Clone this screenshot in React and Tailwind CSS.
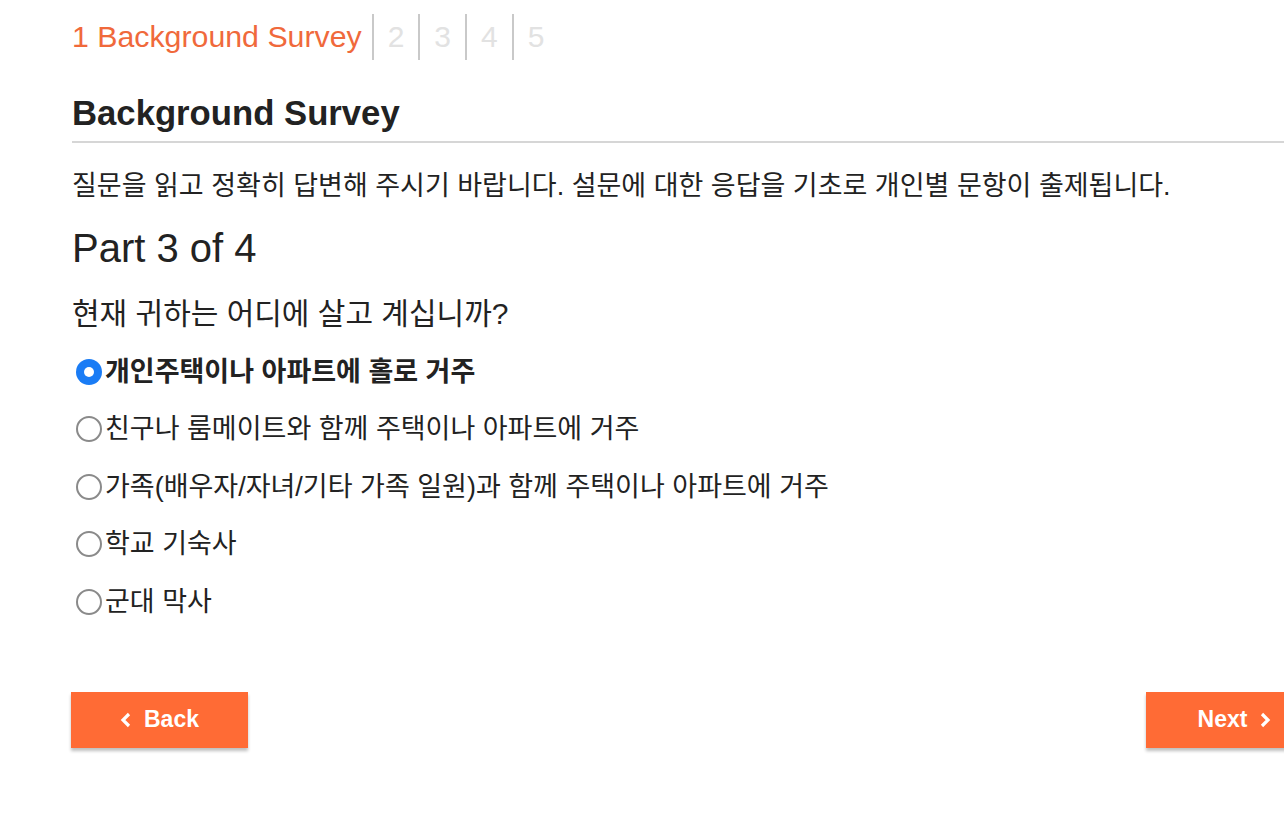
import React from "react";

const font = { fontFamily: '"Liberation Sans", Arial, "Noto Sans CJK KR", sans-serif' };

function Radio({ checked }) {
  return checked ? (
    <span className="mr-[3px] inline-flex h-[26px] w-[26px] shrink-0 items-center justify-center rounded-full bg-[#1a7cf5]">
      <span className="h-[10px] w-[10px] rounded-full bg-white" />
    </span>
  ) : (
    <span className="mr-[3px] inline-block h-[26px] w-[26px] shrink-0 rounded-full border-2 border-[#8a8a8a] bg-white" />
  );
}

export default function App() {
  const options = [
    "개인주택이나 아파트에 홀로 거주",
    "친구나 룸메이트와 함께 주택이나 아파트에 거주",
    "가족(배우자/자녀/기타 가족 일원)과 함께 주택이나 아파트에 거주",
    "학교 기숙사",
    "군대 막사",
  ];
  return (
    <div className="h-[827px] w-[1284px] overflow-hidden bg-white text-[#222]" style={font}>
      <div className="ml-[71px] w-[1252px]">
        <div className="flex h-[74px] items-start pt-[14px]">
          <span className="pl-[1px] pr-[10px] text-[30.3px] leading-[46px] text-[#f0693b]">1 Background Survey</span>
          {["2", "3", "4", "5"].map((n) => (
            <span key={n} className="flex h-[46px] items-center border-l-2 border-[#c9c9c9] px-[14px] text-[30px] leading-[46px] text-[#e2e2e2]">
              {n}
            </span>
          ))}
        </div>
        <h1 className="ml-[1px] h-[69px] border-b-2 border-[#d6d6d6] pt-[20px] text-[34.7px] font-bold leading-[38px] text-[#222]">
          Background Survey
        </h1>
        <p className="ml-[1px] mt-[26px] text-[27px] leading-[34px] text-[#222]">
          질문을 읽고 정확히 답변해 주시기 바랍니다. 설문에 대한 응답을 기초로 개인별 문항이 출제됩니다.
        </p>
        <h2 className="ml-[1px] mt-[21px] text-[40px] leading-[48px] text-[#222]">Part 3 of 4</h2>
        <p className="ml-[1px] mt-[22px] text-[30px] leading-[40px] text-[#222]">현재 귀하는 어디에 살고 계십니까?</p>
        <div className="ml-[5px] mt-[9px] flex flex-col">
          {options.map((o, i) => (
            <label key={i} className="flex h-[57.5px] items-center">
              <Radio checked={i === 0} />
              <span className={`text-[27px] leading-[34px] ${i === 0 ? "font-bold" : ""}`}>{o}</span>
            </label>
          ))}
        </div>
        <div className="mt-[61px] flex justify-between">
          <button className="flex h-[56px] w-[177px] items-center justify-center gap-[12px] bg-[#ff6b35] text-[23px] font-bold text-white shadow-[0_3px_3px_rgba(0,0,0,0.25)]">
            <svg width="12" height="16" viewBox="0 0 12 16"><path d="M9 2 L3 8 L9 14" fill="none" stroke="white" strokeWidth="3.2" /></svg>
            Back
          </button>
          <button className="flex h-[56px] w-[177px] items-center justify-center gap-[12px] bg-[#ff6b35] text-[23px] font-bold text-white shadow-[0_3px_3px_rgba(0,0,0,0.25)]">
            Next
            <svg width="12" height="16" viewBox="0 0 12 16"><path d="M3 2 L9 8 L3 14" fill="none" stroke="white" strokeWidth="3.2" /></svg>
          </button>
        </div>
      </div>
    </div>
  );
}
